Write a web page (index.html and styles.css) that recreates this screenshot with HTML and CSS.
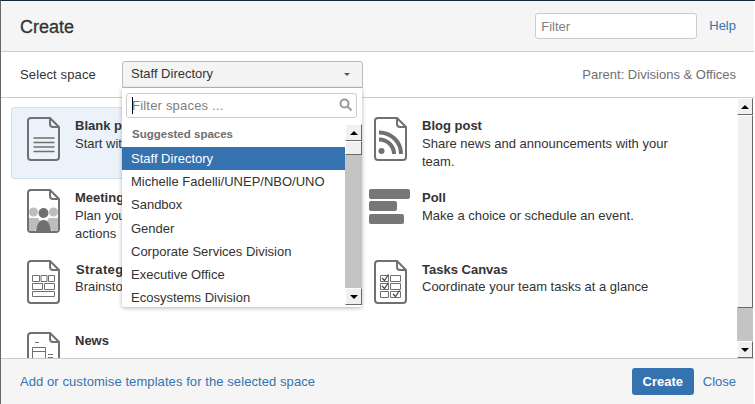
FILE: index.html
```html
<!DOCTYPE html>
<html lang="en">
<head>
<meta charset="utf-8">
<title>Create</title>
<link rel="stylesheet" href="styles.css">
</head>
<body>
<div class="dialog">
  <header class="head">
    <h2 class="title">Create</h2>
    <div class="head-tools">
      <input class="field head-filter" placeholder="Filter">
      <a class="link help">Help</a>
    </div>
  </header>
  <div class="space-bar">
    <span class="space-label">Select space</span>
    <div class="space-select"><span>Staff Directory</span><i class="caret-down"></i></div>
    <span class="parent">Parent: Divisions &amp; Offices</span>
  </div>
  <div class="body">
    <div class="templates">
      <div class="tpl selected">
        <svg class="ico" viewBox="0 0 53 44"><path class="doc" d="M19 1h19l9 9v30a3 3 0 0 1-3 3H19a3 3 0 0 1-3-3V4a3 3 0 0 1 3-3z"/><path class="doc" d="M38 1v6a3 3 0 0 0 3 3h6"/><path class="ln" d="M21.500 21h21M21.500 25.500h21M21.500 30h21M21.500 34.500h21"/></svg>
        <div class="txt"><div class="name">Blank page</div><div class="desc">Start with a blank page.</div></div>
      </div>
      <div class="tpl">
        <svg class="ico" viewBox="0 0 53 44"><path class="doc" d="M19 1h19l9 9v30a3 3 0 0 1-3 3H19a3 3 0 0 1-3-3V4a3 3 0 0 1 3-3z"/><path class="doc" d="M38 1v6a3 3 0 0 0 3 3h6"/><circle class="fill" cx="22.500" cy="34" r="3"/><path class="rss" d="M20 22.500c8.500 0 15 6.500 15 14.500M20 15.500c12.500 0 22 9.500 22 21.500" /></svg>
        <div class="txt"><div class="name">Blog post</div><div class="desc">Share news and announcements with your team.</div></div>
      </div>
      <div class="tpl">
        <svg class="ico" viewBox="0 0 53 44"><path class="doc" d="M19 1h19l9 9v30a3 3 0 0 1-3 3H19a3 3 0 0 1-3-3V4a3 3 0 0 1 3-3z"/><path class="doc" d="M38 1v6a3 3 0 0 0 3 3h6"/><circle class="dim" cx="21.500" cy="23" r="4.500"/><circle class="dim" cx="41.500" cy="23" r="4.500"/><path class="dim" d="M17 29h9l2 3-5 10h-6zM46 29h-9l-2 3 5 10h6z"/><circle class="fill" cx="31.500" cy="24" r="5"/><path class="fill" d="M24 42c1-7 3-11 7.500-11s6.500 4 7.500 11z"/></svg>
        <div class="txt"><div class="name">Meeting notes</div><div class="desc">Plan your meetings and share notes and actions</div></div>
      </div>
      <div class="tpl">
        <svg class="ico" viewBox="0 0 53 44"><rect class="bar" x="10" y="0" width="41" height="10" rx="2"/><rect class="bar" x="10" y="12" width="28" height="10" rx="2"/><rect class="bar" x="10" y="25" width="35" height="10" rx="2"/></svg>
        <div class="txt"><div class="name">Poll</div><div class="desc">Make a choice or schedule an event.</div></div>
      </div>
      <div class="tpl">
        <svg class="ico" viewBox="0 0 53 44"><path class="doc" d="M19 1h19l9 9v30a3 3 0 0 1-3 3H19a3 3 0 0 1-3-3V4a3 3 0 0 1 3-3z"/><path class="doc" d="M38 1v6a3 3 0 0 0 3 3h6"/><path class="thin" d="M20.500 15.500h7v6h-7zM29 15.500h6v6h-6zM36.500 15.500h6v6h-6zM20.500 23.500h10v6h-10zM32.500 23.500h10v6h-10zM20.500 31.500h22v5h-22z"/></svg>
        <div class="txt"><div class="name tight wide">Strategy plan</div><div class="desc">Brainstorm your team's plan.</div></div>
      </div>
      <div class="tpl">
        <svg class="ico" viewBox="0 0 53 44"><path class="doc" d="M19 1h19l9 9v30a3 3 0 0 1-3 3H19a3 3 0 0 1-3-3V4a3 3 0 0 1 3-3z"/><path class="doc" d="M38 1v6a3 3 0 0 0 3 3h6"/><path class="thin" d="M21.500 15.500h8v6h-8zM31.500 15.500h10v6h-10zM21.500 23.500h8v6h-8zM31.500 23.500h10v6h-10zM21.500 31.500h8v6h-8zM31.500 31.500h10v6h-10z"/><path class="chk" d="M23 18l2.500 2.500 4-6M23 26l2.500 2.500 4-6M34 34l2.500 2.500 4-6"/></svg>
        <div class="txt"><div class="name tight">Tasks Canvas</div><div class="desc">Coordinate your team tasks at a glance</div></div>
      </div>
      <div class="tpl">
        <svg class="ico" viewBox="0 0 53 44"><path class="doc" d="M19 1h19l9 9v30a3 3 0 0 1-3 3H19a3 3 0 0 1-3-3V4a3 3 0 0 1 3-3z"/><path class="doc" d="M38 1v6a3 3 0 0 0 3 3h6"/><path class="thin" d="M23 10.500h4M20.500 15.500h13v12h-13zM20.500 19.500h13M36 22.500h5M36 25.500h5"/></svg>
        <div class="txt"><div class="name">News</div></div>
      </div>
    </div>
    <div class="scroll main-scroll">
      <div class="sb-btn"><i class="tri-up"></i></div>
      <div class="sb-thumb"></div>
      <div class="sb-track"></div>
      <div class="sb-btn"><i class="tri-down"></i></div>
    </div>
  </div>
  <footer class="foot">
    <a class="link add-link">Add or customise templates for the selected space</a>
    <div class="foot-actions">
      <button class="primary">Create</button>
      <a class="link close">Close</a>
    </div>
  </footer>
  <div class="menu">
    <div class="menu-search">
      <input class="field menu-input" placeholder="Filter spaces ...">
      <i class="text-caret"></i>
      <svg class="search" viewBox="0 0 14 14"><circle cx="5.500" cy="5.500" r="4"/><path d="M8.500 8.500l4 4"/></svg>
    </div>
    <div class="menu-main">
      <div class="menu-list">
        <div class="menu-head">Suggested spaces</div>
        <div class="opt on">Staff Directory</div>
        <div class="opt">Michelle Fadelli/UNEP/NBO/UNO</div>
        <div class="opt">Sandbox</div>
        <div class="opt">Gender</div>
        <div class="opt">Corporate Services Division</div>
        <div class="opt">Executive Office</div>
        <div class="opt">Ecosystems Division</div>
      </div>
      <div class="scroll menu-scroll">
        <div class="sb-btn"><i class="tri-up"></i></div>
        <div class="sb-thumb"></div>
        <div class="sb-track"></div>
        <div class="sb-btn"><i class="tri-down"></i></div>
      </div>
    </div>
  </div>
</div>
</body>
</html>
```
FILE: styles.css
```css
* { box-sizing: border-box; }
html, body { height: 100%; }
body {
  margin: 0;
  padding: 0 1px 0 0;
  background: #fff;
  border-top: 1px solid #16283a;
  border-left: 1px solid #666;
  font: 13px/18px "Liberation Sans", Arial, sans-serif;
  color: #333;
  overflow: hidden;
}
.dialog {
  position: relative;
  height: 403px;
  background: #fff;
  display: flex;
  flex-direction: column;
}
.head {
  height: 51px;
  flex: none;
  background: #f5f5f5;
  border-bottom: 1px solid #ccc;
  border-radius: 3px 3px 0 0;
  display: flex;
  align-items: center;
  justify-content: space-between;
  padding: 0 18px 0 19px;
}
.title { margin: 2px 0 0; font-size: 18px; line-height: 24px; font-weight: 400; -webkit-text-stroke: .3px #333; }
.head-tools { display: flex; align-items: center; gap: 12px; }
.field {
  border: 1px solid #ccc;
  border-radius: 3px;
  background: #fff;
  font: inherit;
  color: #333;
  outline: none;
}
.field::placeholder { color: #808080; opacity: 1; }
.head-filter { width: 162px; height: 26px; padding: 0 5px; }
.link { color: #3572b0; }
.add-link { letter-spacing: .08px; }
.space-bar {
  height: 46px;
  flex: none;
  border-bottom: 1px solid #ccc;
  display: flex;
  align-items: center;
  padding: 0 18px 0 19px;
}
.space-label { width: 102px; letter-spacing: .12px; }
.space-select {
  width: 241px;
  height: 27px;
  margin-top: -1px;
  border: 1px solid #bbb;
  border-radius: 3px 3px 0 0;
  background: #f4f4f4;
  display: flex;
  align-items: center;
  justify-content: space-between;
  padding: 0 12px 0 8px;
}
.caret-down { width: 0; height: 0; border: 3px solid transparent; border-top: 3px solid #555; border-bottom: 0; }
.parent { margin-left: auto; color: #707070; }
.body { flex: 1; min-height: 0; display: flex; overflow: hidden; }
.templates {
  flex: 1;
  min-width: 0;
  display: grid;
  grid-template-columns: 347px 347px;
  grid-auto-rows: 71.6px;
  padding: 9px 0 0 10px;
  overflow: hidden;
}
.tpl {
  display: flex;
  align-items: flex-start;
  height: 72px;
  border: 1px solid transparent;
  border-radius: 3px;
  padding: 9px 12px 0 0;
  margin-right: 5px;
}
.selected { background: #ebf2f9; border-color: #d0dfee; }
.ico { width: 53px; height: 44px; flex: none; }
.txt { margin-left: 10px; width: 262px; }
.name { font-weight: 700; }
.tight { padding-top: 1px; height: 18px; line-height: 18px; }
.wide { letter-spacing: .4px; padding-left: 1px; }
.doc { fill: none; stroke: #707070; stroke-width: 2; stroke-linejoin: round; }
.ln { fill: none; stroke: #707070; stroke-width: 1.500; }
.thin { fill: none; stroke: #707070; stroke-width: 1; }
.rss { fill: none; stroke: #707070; stroke-width: 4; }
.fill { fill: #707070; }
.dim { fill: #bdbdbd; }
.bar { fill: #777; }
.chk { fill: none; stroke: #444; stroke-width: 1.200; }
.scroll { flex: none; display: flex; flex-direction: column; width: 16px; }
.main-scroll { background: #f0f0f0; margin-right: 1px; }
.sb-btn {
  height: 17px;
  flex: none;
  background: #f0f0f0;
  border: 1px solid;
  border-color: #fff #696969 #696969 #fff;
  display: flex;
  align-items: center;
  justify-content: center;
}
.tri-up, .tri-down { width: 0; height: 0; border: 4px solid transparent; }
.tri-up { border-bottom: 4px solid #000; border-top: 0; }
.tri-down { border-top: 4px solid #000; border-bottom: 0; }
.sb-thumb { background: #f0f0f0; border: 1px solid; border-color: #fff #696969 #696969 #fff; }
.sb-track { background: #c4c4c4; }
.main-scroll .sb-thumb { height: 193px; flex: none; }
.main-scroll .sb-track { flex: 1; }
.foot {
  height: 46px;
  flex: none;
  background: #f5f5f5;
  border-top: 1px solid #ccc;
  display: flex;
  align-items: center;
  justify-content: space-between;
  padding: 0 18px 0 19px;
}
.foot-actions { display: flex; align-items: center; gap: 9px; }
.primary {
  width: 62px;
  height: 27px;
  border: 0;
  border-radius: 3px;
  background: #3572b0;
  color: #fff;
  font: 700 13px/18px "Liberation Sans", Arial, sans-serif;
  padding: 0;
}
.menu {
  position: absolute;
  left: 121px;
  top: 87px;
  width: 240px;
  height: 219px;
  background: #fff;
  border-radius: 0 0 3px 3px;
  box-shadow: 0 1px 4px rgba(0, 0, 0, .3);
  display: flex;
  flex-direction: column;
}
.menu-search { position: relative; height: 36px; flex: none; padding: 5px 5px 0 4px; }
.menu-input { width: 231px; height: 25px; padding: 0 5px; display: block; letter-spacing: .2px; }
.text-caret { position: absolute; left: 10px; top: 9px; width: 1px; height: 17px; background: #000; }
.search { position: absolute; left: 217px; top: 10px; width: 14px; height: 14px; fill: none; stroke: #999; stroke-width: 2; }
.menu-main { flex: 1; min-height: 0; display: flex; }
.menu-list { flex: 1; min-width: 0; overflow: hidden; }
.menu-head { height: 23px; padding: 1px 0 0 10px; font-size: 11.500px; line-height: 18px; font-weight: 700; color: #707070; }
.opt { height: 23.200px; line-height: 23px; padding-left: 9px; white-space: nowrap; }
.opt.on { background: #3572b0; color: #fff; }
.menu-scroll { width: 17px; background: #c4c4c4; margin-bottom: 2px; }
.menu-scroll .sb-thumb { height: 14px; flex: none; }
.menu-scroll .sb-track { flex: 1; }
```
